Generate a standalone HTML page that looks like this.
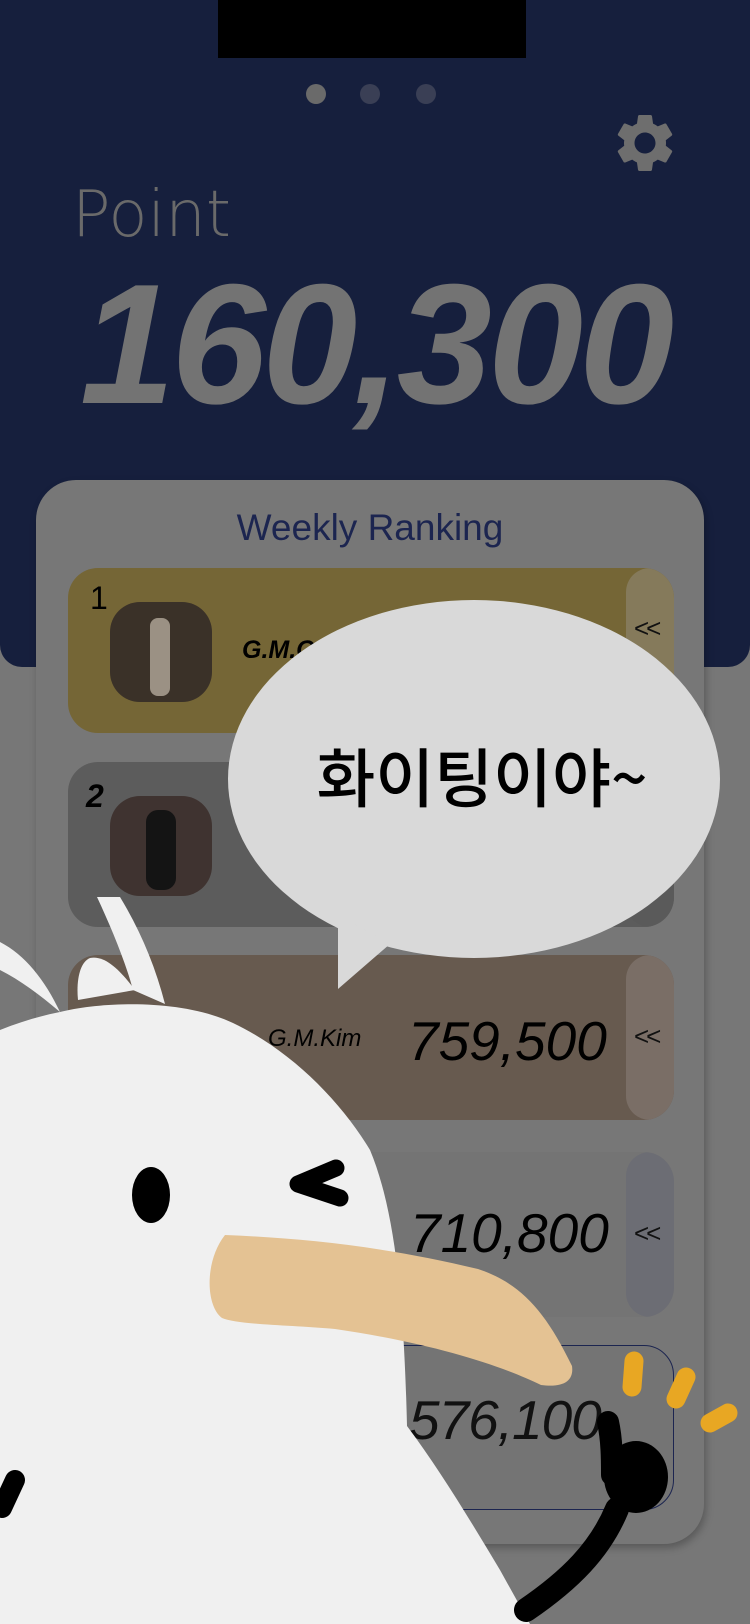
<!DOCTYPE html>
<html><head><meta charset="utf-8"><style>
*{margin:0;padding:0;box-sizing:border-box}
body{width:750px;height:1624px;overflow:hidden;background:#777;position:relative;font-family:"Liberation Sans","Noto Sans CJK KR",sans-serif}
.abs{position:absolute}
.hdr{left:0;top:0;width:750px;height:667px;background:#161f3d;border-radius:0 0 22px 22px}
.notch{left:218px;top:0;width:308px;height:58px;background:#000}
.dot{width:20px;height:20px;border-radius:50%;top:84px;background:#3a3f55}
.panel{left:36px;top:480px;width:668px;height:1064px;background:#777;border-radius:40px;box-shadow:2px 4px 8px rgba(0,0,0,.25)}
.row{left:68px;width:606px;height:165px;border-radius:30px;overflow:hidden}
.tab{position:absolute;right:0;top:0;width:48px;height:100%;border-radius:24px}
.num{position:absolute;font-style:italic;color:#000;font-size:55px;letter-spacing:0}
.ch{position:absolute;left:566px;font-size:26px;color:#111;letter-spacing:-3px}
</style></head><body>
<div class="abs hdr"></div>
<div class="abs notch"></div>
<div class="abs dot" style="left:306px;background:#6a6a6a"></div>
<div class="abs dot" style="left:360px"></div>
<div class="abs dot" style="left:416px"></div>
<svg class="abs" style="left:610px;top:108px" width="70" height="70" viewBox="0 0 24 24"><path fill="#6e6e6e" d="M19.14,12.94c0.04-0.3,0.06-0.61,0.06-0.94c0-0.32-0.02-0.64-0.07-0.94l2.03-1.58c0.18-0.14,0.23-0.41,0.12-0.61l-1.92-3.32c-0.12-0.22-0.37-0.29-0.59-0.22l-2.39,0.96c-0.5-0.38-1.03-0.7-1.62-0.94L14.4,2.81c-0.04-0.24-0.24-0.41-0.48-0.41h-3.84c-0.24,0-0.43,0.17-0.47,0.41L9.25,5.35C8.66,5.59,8.12,5.920,7.63,6.29L5.24,5.33c-0.22-0.08-0.47,0-0.59,0.22L2.74,8.87C2.62,9.08,2.66,9.34,2.86,9.48l2.03,1.58C4.84,11.36,4.8,11.690,4.8,12s0.02,0.64,0.07,0.94l-2.030,1.58c-0.18,0.14-0.23,0.41-0.12,0.61l1.92,3.32c0.12,0.22,0.37,0.29,0.59,0.22l2.39-0.96c0.5,0.38,1.03,0.7,1.62,0.94l0.36,2.54c0.05,0.24,0.24,0.41,0.48,0.41h3.84c0.24,0,0.44-0.17,0.47-0.41l0.36-2.54c0.59-0.24,1.13-0.56,1.620-0.94l2.39,0.96c0.22,0.08,0.47,0,0.59-0.22l1.92-3.32c0.12-0.22,0.07-0.47-0.12-0.61L19.14,12.94z M12,15.6c-1.98,0-3.6-1.62-3.6-3.6s1.62-3.6,3.6-3.6s3.6,1.62,3.6,3.6S13.98,15.6,12,15.6z"/></svg>
<div class="abs" style="left:72px;top:175px;font-family:'DejaVu Sans',sans-serif;font-weight:200;font-size:64px;line-height:80px;color:#6a6a6a">Point</div>
<div class="abs" style="left:80px;top:250px;font-size:171px;line-height:190px;font-weight:bold;font-style:italic;color:#737373;letter-spacing:-4px">160,300</div>

<div class="abs panel"></div>
<div class="abs" style="left:36px;width:668px;top:503px;text-align:center;font-size:37px;color:#1c2550;line-height:50px">Weekly Ranking</div>

<div class="abs row" style="top:568px;background:#756636"><div class="tab" style="background:#857a5b"></div>
<div class="ch" style="top:45px">&lt;&lt;</div>
<div style="position:absolute;left:22px;top:12px;font-size:32px">1</div>
<div style="position:absolute;left:42px;top:34px;width:102px;height:100px;border-radius:30px;background:#3a3128"></div>
<div style="position:absolute;left:82px;top:50px;width:20px;height:78px;background:#9b9184;border-radius:8px"></div>
<div style="position:absolute;left:174px;top:68px;font-size:25px;font-weight:bold;font-style:italic">G.M.C</div>
</div>
<div class="abs row" style="top:762px;background:#5c5c5c"><div class="tab" style="background:#5a5a5a"></div>
<div style="position:absolute;left:18px;top:16px;font-size:32px;font-weight:bold;font-style:italic">2</div>
<div style="position:absolute;left:42px;top:34px;width:102px;height:100px;border-radius:30px;background:#3f3330"></div>
<div style="position:absolute;left:78px;top:48px;width:30px;height:80px;background:#141414;border-radius:12px"></div>
</div>
<div class="abs row" style="top:955px;background:#675a4f"><div class="tab" style="background:#7a6e66"></div>
<div style="position:absolute;left:200px;top:70px;font-size:24px;font-style:italic">G.M.Kim</div>
<div class="num" style="left:340px;top:54px">759,500</div>
<div class="ch" style="top:66px">&lt;&lt;</div></div>
<div class="abs row" style="top:1152px;background:#747474"><div class="tab" style="background:#6c6d74"></div>
<div class="num" style="left:342px;top:49px">710,800</div>
<div class="ch" style="top:66px">&lt;&lt;</div></div>
<div class="abs row" style="top:1345px;background:#747474;border:1.5px solid #1c2550"><div class="num" style="left:340px;top:42px;font-weight:normal;letter-spacing:-1px;color:#111">576,100</div></div>

<svg class="abs" style="left:0;top:0" width="750" height="1624">
<ellipse cx="474" cy="779" rx="246" ry="179" fill="#d9d9d9"/>
<polygon points="338,915 338,989 390,944" fill="#d9d9d9"/>
<text x="482" y="802" text-anchor="middle" font-size="64" font-family="Noto Sans CJK KR,sans-serif" font-weight="500" fill="#000">화이팅이야~</text>
<path d="M0,942 C25,955 45,980 60,1012 C40,995 20,980 0,970 Z" fill="#f0f0f0"/>
<path d="M97,897 L120,897 C140,930 155,965 165,1004 L133,990 C125,960 110,925 97,897 Z" fill="#f0f0f0"/>
<path d="M78,1000 C76,980 80,962 90,958 C105,955 120,970 135,990 Z" fill="#f0f0f0"/>
<path d="M0,1030 C20,1022 40,1016 60,1012 C100,1002 180,998 233,1023 C290,1050 340,1100 370,1150 C395,1210 404,1300 407,1426 C440,1470 470,1520 500,1570 L530,1624 L0,1624 Z" fill="#f0f0f0"/>
<ellipse cx="151" cy="1195" rx="19" ry="28" fill="#000"/>
<path d="M336,1168 L298,1184 L340,1198" stroke="#000" stroke-width="17" fill="none" stroke-linecap="round" stroke-linejoin="round"/>
<path d="M225,1235 C300,1238 383,1246 478,1269 C520,1283 545,1310 572,1366 C574,1380 565,1388 541,1385 C500,1365 431,1343 335,1329 C290,1325 239,1325 222,1318 C205,1305 205,1260 225,1235 Z" fill="#e4c293"/>
<path d="M526,1610 C570,1580 600,1550 617,1509" stroke="#000" stroke-width="24" fill="none" stroke-linecap="round"/>
<path d="M608,1422 C612,1440 612,1460 612,1475" stroke="#000" stroke-width="22" fill="none" stroke-linecap="round"/>
<ellipse cx="636" cy="1477" rx="32" ry="36" fill="#000"/>
<path d="M15,1480 L2,1508" stroke="#000" stroke-width="20" stroke-linecap="round"/>
<g stroke="#e8a723" stroke-width="19" stroke-linecap="round"><path d="M634,1361 L632,1387"/><path d="M686,1377 L676,1399"/><path d="M728,1413 L710,1423"/></g>
</svg>
</body></html>
